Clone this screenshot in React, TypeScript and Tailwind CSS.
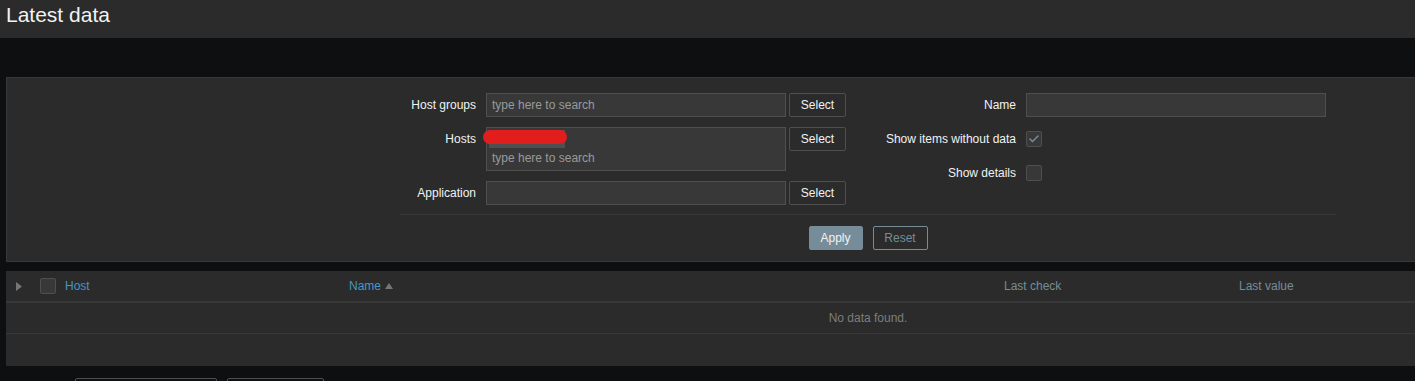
import { Check } from 'lucide-react';

const font = { fontFamily: '"Liberation Sans", Arial, sans-serif' };

function FieldLabel({ children, width }: { children: string; width: string }) {
  return <div className={`${width} shrink-0 text-right text-[12px] text-[#f2f2f2] leading-[24px]`}>{children}</div>;
}

function SelectButton() {
  return (
    <button className="ml-[3px] block w-[57px] h-[24px] shrink-0 rounded-[2px] border border-[#4f4f4f] bg-[#2b2b2b] text-[12px] leading-[22px] text-[#f2f2f2]">
      Select
    </button>
  );
}

function Checkbox({ checked }: { checked?: boolean }) {
  return (
    <div className="w-[16px] h-[16px] rounded-[2px] border border-[#4f4f4f] bg-[#383838] flex items-center justify-center">
      {checked && <Check className="w-[12px] h-[12px] text-[#768d99]" strokeWidth={3} aria-hidden="true" />}
    </div>
  );
}

export default function App() {
  return (
    <div className="w-[1415px] h-[381px] overflow-hidden bg-[#0e0f11]" style={font}>
      <div className="w-[1736px]">
        <header className="h-[38px] bg-[#2b2b2b] px-[6px]">
          <h1 className="text-[21px] leading-[30px] text-[#f2f2f2]">Latest data</h1>
        </header>

        <div className="px-[6px] pt-[39px]">
          {/* filter */}
          <div className="bg-[#2b2b2b] border border-[#383838] pt-[15px] pb-[11px]">
            <div className="w-[936px] mx-auto">
              <div className="flex">
                <div className="w-[468px] flex flex-col gap-[10px]">
                  <div className="flex items-start">
                    <FieldLabel width="w-[76px]">Host groups</FieldLabel>
                    <div className="ml-[10px] w-[300px] h-[24px] border border-[#4f4f4f] bg-[#383838] px-[5px] text-[12px] leading-[22px] text-[#9a9a9a]">
                      type here to search
                    </div>
                    <SelectButton />
                  </div>
                  <div className="flex items-start">
                    <FieldLabel width="w-[76px]">Hosts</FieldLabel>
                    <div className="relative ml-[10px] w-[300px] h-[44px] border border-[#4f4f4f] bg-[#383838] px-[2px] pt-[2px]">
                      <div className="w-[76px] h-[18px] bg-[#4f4f4f]" />
                      <div className="px-[3px] text-[12px] leading-[20px] text-[#9a9a9a]">type here to search</div>
                      <div className="absolute left-[-4px] top-[2px] w-[84px] h-[14px] rounded-full bg-[#e21d1d]" />
                    </div>
                    <SelectButton />
                  </div>
                  <div className="flex items-start">
                    <FieldLabel width="w-[76px]">Application</FieldLabel>
                    <div className="ml-[10px] w-[300px] h-[24px] border border-[#4f4f4f] bg-[#383838]" />
                    <SelectButton />
                  </div>
                </div>
                <div className="w-[468px] flex flex-col gap-[10px]">
                  <div className="flex items-center">
                    <FieldLabel width="w-[148px]">Name</FieldLabel>
                    <div className="ml-[10px] w-[300px] h-[24px] border border-[#4f4f4f] bg-[#383838]" />
                  </div>
                  <div className="flex items-center h-[24px]">
                    <FieldLabel width="w-[148px]">Show items without data</FieldLabel>
                    <div className="ml-[10px]"><Checkbox checked /></div>
                  </div>
                  <div className="flex items-center h-[24px]">
                    <FieldLabel width="w-[148px]">Show details</FieldLabel>
                    <div className="ml-[10px]"><Checkbox /></div>
                  </div>
                </div>
              </div>
              <div className="mt-[9px] border-t border-[#383838] pt-[11px] flex justify-center gap-[10px]">
                <button className="h-[24px] w-[54px] rounded-[2px] bg-[#768d99] border border-[#768d99] text-[12px] text-[#f2f2f2]">Apply</button>
                <button className="h-[24px] w-[55px] rounded-[2px] border border-[#768d99] text-[12px] text-[#768d99]">Reset</button>
              </div>
            </div>
          </div>

          {/* table */}
          <div className="mt-[9px] bg-[#2b2b2b] text-[12px]">
            <div className="flex items-center h-[32px] border-b-2 border-[#383838]">
              <div className="w-[28px] pl-[10px] flex">
                <svg width="6" height="9" viewBox="0 0 6 9" aria-hidden="true">
                  <path d="M0 0 L6 4.5 L0 9 Z" fill="#767676" />
                </svg>
              </div>
              <div className="w-[25px] pl-[6px]"><Checkbox /></div>
              <div className="w-[284px] pl-[6px] text-[#4796c4]">Host</div>
              <div className="w-[655px] pl-[6px] text-[#4796c4] flex items-center gap-[4px]">
                Name
                <svg width="8" height="6" viewBox="0 0 8 6" aria-hidden="true">
                  <path d="M0 6 L4 0 L8 6 Z" fill="#767676" />
                </svg>
              </div>
              <div className="w-[235px] pl-[6px] text-[#768d99]">Last check</div>
              <div className="pl-[6px] text-[#768d99]">Last value</div>
            </div>
            <div className="h-[31px] border-b border-[#383838] flex items-center justify-center text-[#7d7d7d]">
              No data found.
            </div>
            <div className="h-[32px]" />
          </div>

          <div className="mt-[12px] flex gap-[10px] pl-[69px]">
            <div className="w-[142px] h-[24px] rounded-[2px] border border-[#4f4f4f]" />
            <div className="w-[97px] h-[24px] rounded-[2px] border border-[#4f4f4f]" />
          </div>
        </div>
      </div>
    </div>
  );
}
